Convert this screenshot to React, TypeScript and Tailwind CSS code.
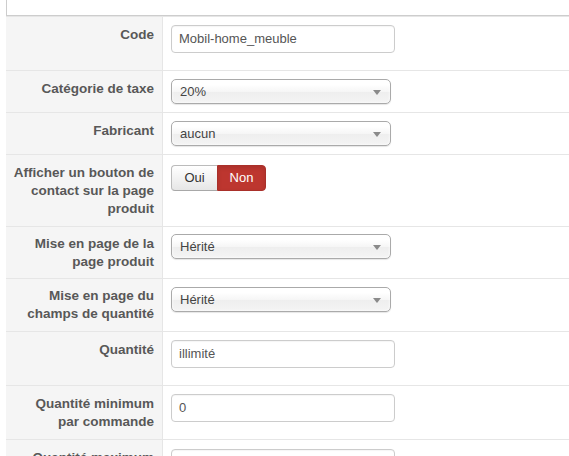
import React from "react";

const Arrow = () => (
  <svg width="8" height="5" viewBox="0 0 8 5" className="absolute right-[9px] top-[10px]">
    <path d="M0 0 L8 0 L4 5 Z" fill="#8a8a8a" />
  </svg>
);

const Select = ({ value }: { value: string }) => (
  <div className="relative w-[220px] h-[25px] rounded-[5px] border border-[#aaa] bg-[linear-gradient(#fff_20%,#f6f6f6_50%,#eee_52%,#f4f4f4_100%)] shadow-[inset_0_0_3px_#fff,0_1px_1px_rgba(0,0,0,0.1)] pl-[8px] text-[#444] leading-[23px]">
    {value}
    <Arrow />
  </div>
);

const Input = ({ value }: { value: string }) => (
  <div className="w-[224px] h-[28px] rounded-[4px] border border-[#ccc] bg-white pl-[7px] text-[#555] leading-[26px] shadow-[inset_0_1px_1px_rgba(0,0,0,0.04)]">
    {value}
  </div>
);

type RowProps = {
  label: React.ReactNode;
  h: string;
  lpt: string;
  cpt: string;
  first?: boolean;
  children?: React.ReactNode;
};

const Row = ({ label, h, lpt, cpt, first, children }: RowProps) => (
  <div className={`flex ${h} ${first ? "" : "border-t border-[#e6e6e6]"}`}>
    <div className={`w-[157px] shrink-0 bg-[#f5f5f5] border-r border-[#e6e6e6] pr-[8px] text-right font-bold text-[13.5px] text-[#585858] leading-[18px] ${lpt}`}>
      {label}
    </div>
    <div className={`flex-1 pl-[8px] ${cpt}`}>{children}</div>
  </div>
);

export default function App() {
  return (
    <div className="w-[569px] h-[456px] overflow-hidden bg-white pl-[6px] font-['Liberation_Sans',Arial,sans-serif] text-[13px]">
      <div className="h-[16px] border-l border-b border-[#cdcdcd]" />
      <div className="h-px bg-[#e6e6e6]" />
      <Row first h="h-[53px]" lpt="pt-[9px]" cpt="pt-[8px]" label="Code">
        <Input value="Mobil-home_meuble" />
      </Row>
      <Row h="h-[42px]" lpt="pt-[9px]" cpt="pt-[8px]" label="Catégorie de taxe">
        <Select value="20%" />
      </Row>
      <Row h="h-[42px]" lpt="pt-[9px]" cpt="pt-[8px]" label="Fabricant">
        <Select value="aucun" />
      </Row>
      <Row
        h="h-[72px]"
        lpt="pt-[9px]"
        cpt="pt-[10px]"
        label={
          <>
            Afficher un bouton de
            <br />
            contact sur la page
            <br />
            produit
          </>
        }
      >
        <div className="flex h-[26px] w-[95px]">
          <div className="w-[46px] flex items-center justify-center rounded-l-[4px] border border-r-0 border-[#bbb] border-b-[#a8a8a8] bg-[linear-gradient(#fff,#e6e6e6)] text-[#333]">
            Oui
          </div>
          <div className="w-[49px] flex items-center justify-center rounded-r-[4px] border border-[#a9302a] bg-[#bd362f] text-white shadow-[inset_0_2px_4px_rgba(0,0,0,0.1)]">
            Non
          </div>
        </div>
      </Row>
      <Row
        h="h-[52px]"
        lpt="pt-[8px]"
        cpt="pt-[7px]"
        label={
          <>
            Mise en page de la
            <br />
            page produit
          </>
        }
      >
        <Select value="Hérité" />
      </Row>
      <Row
        h="h-[53px]"
        lpt="pt-[8px]"
        cpt="pt-[8px]"
        label={
          <>
            Mise en page du
            <br />
            champs de quantité
          </>
        }
      >
        <Select value="Hérité" />
      </Row>
      <Row h="h-[54px]" lpt="pt-[9px]" cpt="pt-[8px]" label="Quantité">
        <Input value="illimité" />
      </Row>
      <Row
        h="h-[54px]"
        lpt="pt-[9px]"
        cpt="pt-[8px]"
        label={
          <>
            Quantité minimum
            <br />
            par commande
          </>
        }
      >
        <Input value="0" />
      </Row>
      <Row
        h="h-[54px]"
        lpt="pt-[9px]"
        cpt="pt-[9px]"
        label={
          <>
            Quantité maximum
            <br />
            par commande
          </>
        }
      >
        <Input value="" />
      </Row>
    </div>
  );
}
